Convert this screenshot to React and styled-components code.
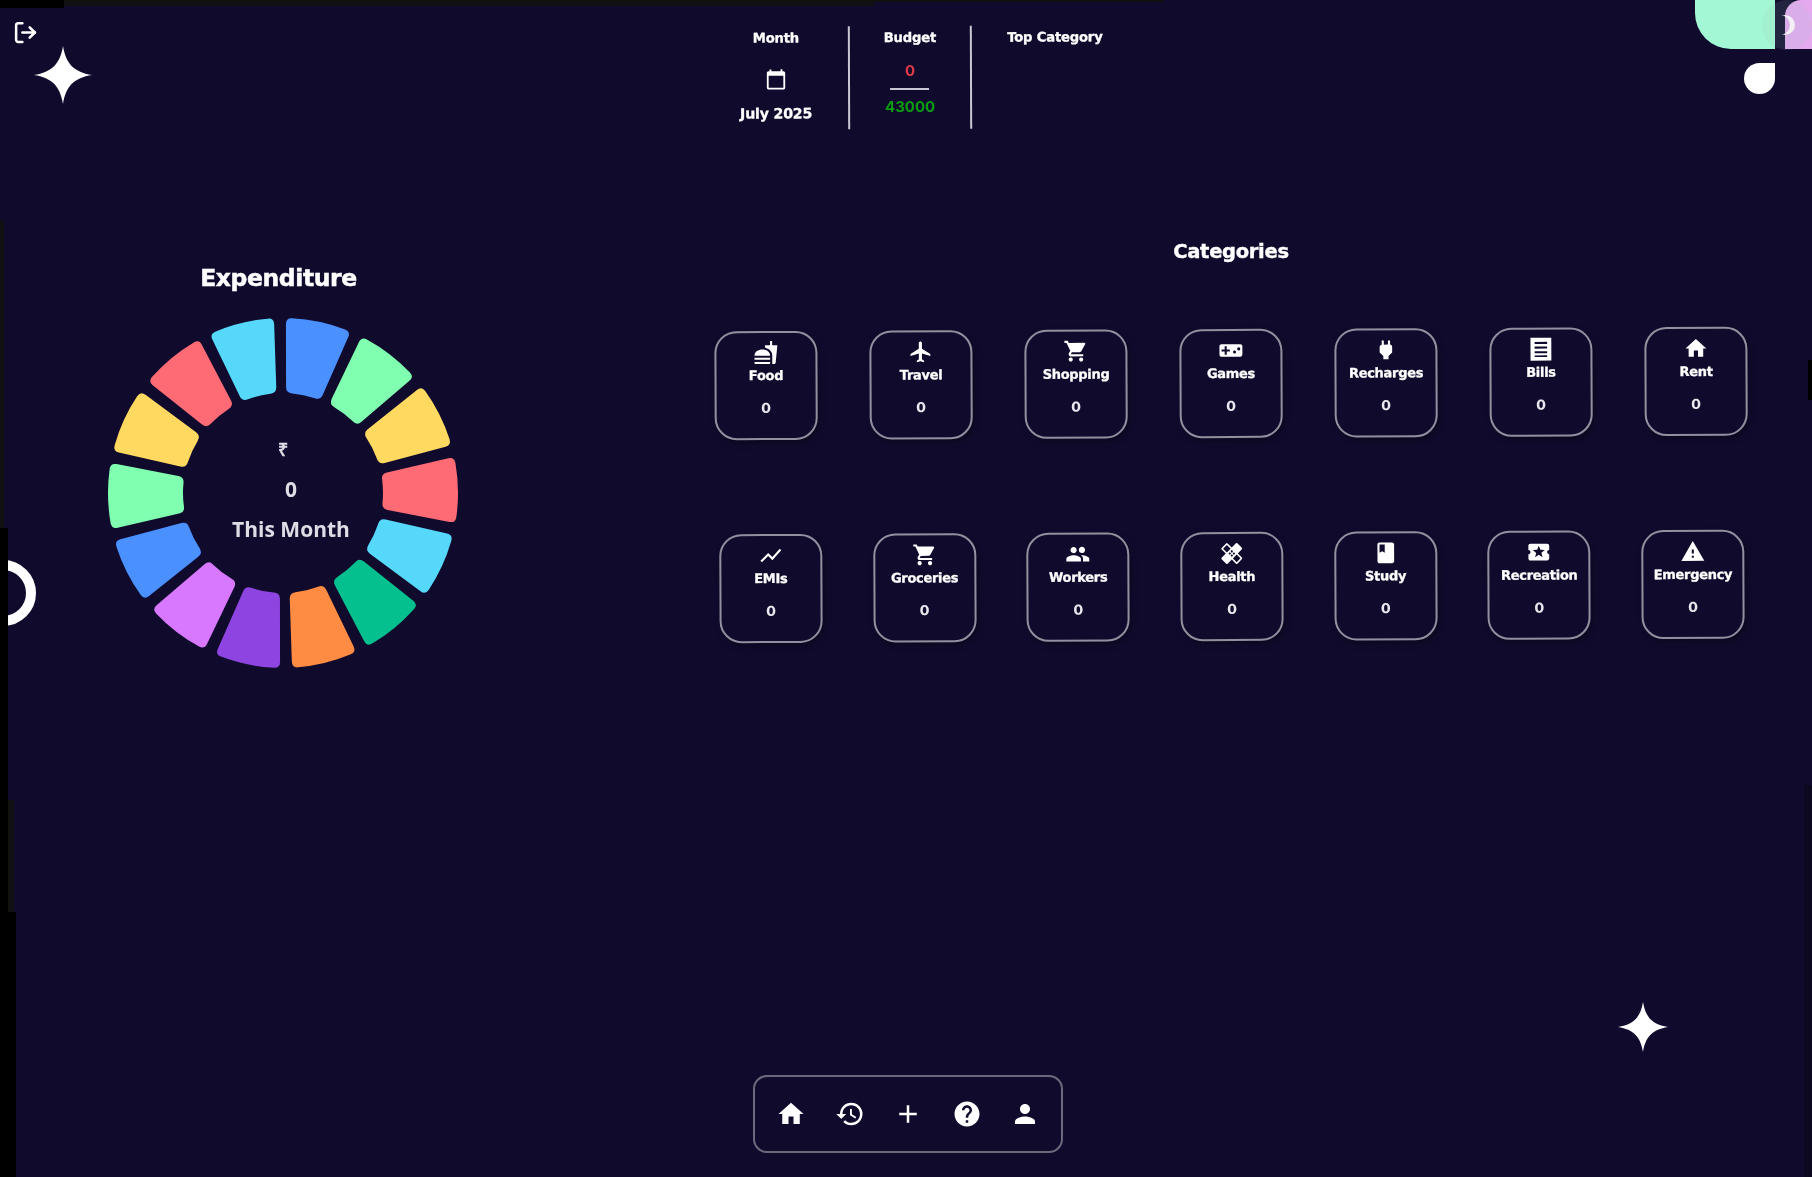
import { createGlobalStyle, styled } from "styled-components";
import { LogOut } from "lucide-react";
import {
  MdAdd,
  MdBook,
  MdCalendarToday,
  MdFastfood,
  MdFlight,
  MdGroup,
  MdHealing,
  MdHelp,
  MdHistory,
  MdHome,
  MdLocalActivity,
  MdPerson,
  MdPower,
  MdShoppingCart,
  MdShowChart,
  MdVideogameAsset,
  MdWarning,
} from "react-icons/md";

const WIDE = `"DejaVu Sans", "Liberation Sans", sans-serif`;

const BillsIcon = ({ size }) => (
  <svg width={size} height={size} viewBox="0 0 24 24">
    <path
      fill="#fff"
      fillRule="evenodd"
      d="M2 1h20v22H2z M6 5v2h12V5z M6 9.500v2h12v-2z M6 14v2h12v-2z M6 18v1.500h12V18z"
    />
  </svg>
);

const row_one = [
  { label: "Food", Icon: MdFastfood },
  { label: "Travel", Icon: MdFlight },
  { label: "Shopping", Icon: MdShoppingCart },
  { label: "Games", Icon: MdVideogameAsset },
  { label: "Recharges", Icon: MdPower },
  { label: "Bills", Icon: BillsIcon },
  { label: "Rent", Icon: MdHome },
];

const row_two = [
  { label: "EMIs", Icon: MdShowChart },
  { label: "Groceries", Icon: MdShoppingCart },
  { label: "Workers", Icon: MdGroup },
  { label: "Health", Icon: MdHealing },
  { label: "Study", Icon: MdBook },
  { label: "Recreation", Icon: MdLocalActivity },
  { label: "Emergency", Icon: MdWarning },
];

const wheel_colors = [
  "#4a90ff",
  "#80ffb0",
  "#ffd960",
  "#ff6b75",
  "#56d8fb",
  "#04c08e",
  "#ff8c42",
  "#8e44e0",
  "#d877ff",
  "#4a90ff",
  "#80ffb0",
  "#ffd960",
  "#ff6b75",
  "#56d8fb",
];

const polar = (r, deg) => {
  const rad = (deg * Math.PI) / 180;
  return [r * Math.sin(rad), -r * Math.cos(rad)];
};

const toward = (a, b, dist) => {
  const len = Math.hypot(b[0] - a[0], b[1] - a[1]);
  return [a[0] + ((b[0] - a[0]) * dist) / len, a[1] + ((b[1] - a[1]) * dist) / len];
};

const pt = (p) => `${p[0].toFixed(2)} ${p[1].toFixed(2)}`;

const segment_path = (a0, a1, R = 175, r = 100, corner = 6) => {
  const to_deg = 180 / Math.PI;
  const o0 = a0 + (6 / R) * to_deg;
  const o1 = a1 - (6 / R) * to_deg;
  const i0 = a0 + (4.8 / r) * to_deg;
  const i1 = a1 - (4.8 / r) * to_deg;
  const co = (corner / R) * to_deg;
  const ci = (corner / r) * to_deg;
  const O0 = polar(R, o0);
  const O1 = polar(R, o1);
  const I0 = polar(r, i0);
  const I1 = polar(r, i1);
  return [
    `M ${pt(polar(R, o0 + co))}`,
    `A ${R} ${R} 0 0 1 ${pt(polar(R, o1 - co))}`,
    `Q ${pt(O1)} ${pt(toward(O1, I1, corner))}`,
    `L ${pt(toward(I1, O1, corner))}`,
    `Q ${pt(I1)} ${pt(polar(r, i1 - ci))}`,
    `A ${r} ${r} 0 0 0 ${pt(polar(r, i0 + ci))}`,
    `Q ${pt(I0)} ${pt(toward(I0, O0, corner))}`,
    `L ${pt(toward(O0, I0, corner))}`,
    `Q ${pt(O0)} ${pt(polar(R, o0 + co))}`,
    "Z",
  ].join(" ");
};

const Sparkle = ({ className }) => (
  <svg className={className} viewBox="-100 -100 200 200">
    <path d="M0 -100 C10 -38 38 -10 100 0 C38 10 10 38 0 100 C-10 38 -38 10 -100 0 C-38 -10 -10 -38 0 -100 Z" fill="#fff" />
  </svg>
);

const CategoryRow = ({ items, $gap }) => (
  <Row $gap={$gap}>
    {items.map(({ label, Icon }) => (
      <Card key={label}>
        <Icon size={25} />
        <CardLabel>{label}</CardLabel>
        <CardValue>0</CardValue>
      </Card>
    ))}
  </Row>
);

const App = () => {
  const step = 360 / wheel_colors.length;
  return (
    <Page>
      <GlobalStyle />
      <Content>
        <Header>
          <StatColumn $width={146} $divider>
            <StatTitle>Month</StatTitle>
            <MonthIcon size={24} />
            <MonthValue>July 2025</MonthValue>
          </StatColumn>
          <StatColumn $width={122} $divider>
            <StatTitle>Budget</StatTitle>
            <Fraction>
              <Spent>0</Spent>
              <Limit>43000</Limit>
            </Fraction>
          </StatColumn>
          <StatColumn $width={166}>
            <StatTitle>Top Category</StatTitle>
          </StatColumn>
        </Header>

        <Main>
          <LeftSection>
            <SectionTitle>Expenditure</SectionTitle>
            <Wheel>
              <svg width="360" height="360" viewBox="-180 -180 360 360">
                {wheel_colors.map((color, i) => (
                  <path
                    key={i}
                    d={segment_path(i * step - 1, (i + 1) * step - 1)}
                    fill={color}
                  />
                ))}
              </svg>
              <WheelCenter>
                <Rupee>₹</Rupee>
                <span>0</span>
                <span>This Month</span>
              </WheelCenter>
            </Wheel>
          </LeftSection>

          <RightSection>
            <CategoriesTitle>Categories</CategoriesTitle>
            <Rows>
              <CategoryRow items={row_one} $gap={52} />
              <CategoryRow items={row_two} $gap={50.7} />
            </Rows>
          </RightSection>
        </Main>

        <BottomNav>
          <MdHome size={30} />
          <MdHistory size={30} />
          <MdAdd size={30} />
          <MdHelp size={30} />
          <MdPerson size={30} />
        </BottomNav>

        <LogoutIcon size={25} strokeWidth={2.4} />
        <TopStar />
        <BottomStar />
        <Ring />
        <MintShape />
        <PinkShape />
        <MoonHalo />
        <Moon />
        <Drop />
      </Content>

      <EdgeStrip $left={0} $top={0} $w={64} $h={8} $color="#000" />
      <EdgeStrip $left={64} $top={0} $w={810} $h={6} $color="#111" />
      <EdgeStrip $left={874} $top={0} $w={290} $h={2} $color="#111" />
      <EdgeStrip $left={0} $top={220} $w={4} $h={308} $color="#111" />
      <EdgeStrip $left={0} $top={528} $w={8} $h={384} $color="#000" />
      <EdgeStrip $left={8} $top={800} $w={6} $h={112} $color="#111" />
      <EdgeStrip $left={0} $top={912} $w={16} $h={265} $color="#000" />
      <EdgeStrip $left={1808} $top={360} $w={4} $h={40} $color="#000" />
      <EdgeStrip $left={1804} $top={785} $w={8} $h={392} $color="#0b0820" />
    </Page>
  );
};
export default App;

const GlobalStyle = createGlobalStyle`
  html, body {
    margin: 0;
    padding: 0;
    background: #100b2d;
  }
`;

const Page = styled.div`
  position: relative;
  width: 1812px;
  height: 1177px;
  overflow: hidden;
  background: #100b2d;
  color: #fff;
`;

const Content = styled.div`
  position: relative;
  display: flex;
  flex-direction: column;
  height: 100%;
  filter: blur(0.7px);
`;

const Header = styled.header`
  display: flex;
  height: 103px;
  margin-top: 26px;
  padding-left: 704px;
  transform: rotate(-0.2deg);
`;

const StatColumn = styled.div`
  display: flex;
  flex-direction: column;
  align-items: center;
  box-sizing: border-box;
  width: ${({ $width }) => $width}px;
  padding: 4px 0 8px;
  border-right: ${({ $divider }) => ($divider ? "2px solid #c9c8d2" : "none")};
`;

const StatTitle = styled.div`
  font-family: ${WIDE};
  font-size: 13.2px;
  line-height: 16px;
  font-weight: 700;
  letter-spacing: -0.2px;
  -webkit-text-stroke: 0.3px #fff;
`;

const MonthIcon = styled(MdCalendarToday)`
  margin-top: 22px;
`;

const MonthValue = styled(StatTitle)`
  margin-top: 15px;
  font-size: 14.2px;
`;

const Fraction = styled.div`
  display: flex;
  flex-direction: column;
  align-items: center;
  margin-top: 15px;
  font-family: Inter, sans-serif;
  font-size: 15px;
  font-weight: 700;
`;

const Spent = styled.div`
  width: 39px;
  padding-bottom: 8px;
  border-bottom: 2px solid #c9c8d2;
  margin-bottom: 7px;
  text-align: center;
  color: #e03a46;
`;

const Limit = styled.div`
  color: #0a9c0f;
`;

const Main = styled.main`
  display: flex;
  flex: 1;
  margin-top: 105px;
`;

const LeftSection = styled.section`
  display: flex;
  flex-direction: column;
  align-items: center;
  width: 566px;
  padding-top: 30px;
`;

const SectionTitle = styled.h2`
  margin: 0 9px 21px 0;
  font-family: ${WIDE};
  font-size: 23.5px;
  line-height: 28px;
  font-weight: 700;
  letter-spacing: -0.4px;
  -webkit-text-stroke: 0.5px #fff;
`;

const Wheel = styled.div`
  position: relative;
  width: 360px;
  height: 360px;
  svg {
    display: block;
  }
`;

const WheelCenter = styled.div`
  position: absolute;
  inset: 0 0 0 16px;
  display: flex;
  flex-direction: column;
  align-items: center;
  justify-content: center;
  gap: 11px;
  padding-bottom: 7px;
  font-family: "Open Sans", sans-serif;
  font-size: 21px;
  line-height: 29px;
  font-weight: 700;
  color: #dedde6;
`;

const Rupee = styled.span`
  margin-left: -16px;
  font-size: 18px;
`;

const RightSection = styled.section`
  flex: 1;
  display: flex;
  flex-direction: column;
  align-items: center;
  padding: 4px 0 0 84px;
`;

const CategoriesTitle = styled.h2`
  margin: 0 0 63px;
  font-family: ${WIDE};
  font-size: 19.5px;
  line-height: 28px;
  font-weight: 700;
  letter-spacing: -0.3px;
  -webkit-text-stroke: 0.4px #fff;
`;

const Rows = styled.div`
  display: flex;
  flex-direction: column;
  align-items: center;
  gap: 94px;
  transform: rotate(-0.25deg);
`;

const Row = styled.div`
  display: flex;
  gap: ${({ $gap }) => $gap}px;
`;

const Card = styled.div`
  display: flex;
  flex-direction: column;
  align-items: center;
  box-sizing: border-box;
  width: 103px;
  height: 109px;
  padding-top: 7px;
  border: 2px solid #92909f;
  border-radius: 22px;
  box-shadow: 2px 3px 6px rgba(0, 0, 0, 0.35);
`;

const CardLabel = styled.div`
  margin-top: 3px;
  font-family: ${WIDE};
  font-size: 13px;
  line-height: 16px;
  font-weight: 700;
  letter-spacing: -0.3px;
  white-space: nowrap;
  -webkit-text-stroke: 0.3px #fff;
`;

const CardValue = styled.div`
  margin-top: 15px;
  font-family: Inter, sans-serif;
  font-size: 14px;
  line-height: 18px;
  font-weight: 800;
  color: #e8e8ee;
`;

const BottomNav = styled.nav`
  display: flex;
  align-items: center;
  justify-content: space-between;
  box-sizing: border-box;
  width: 310px;
  height: 78px;
  margin: 0 0 24px 753px;
  padding: 0 21px 0 21px;
  border: 2px solid #6c697c;
  border-radius: 14px;
`;

const LogoutIcon = styled(LogOut)`
  position: absolute;
  left: 13px;
  top: 20px;
`;

const TopStar = styled(Sparkle)`
  position: absolute;
  left: 34px;
  top: 34px;
  width: 58px;
  height: 82px;
`;

const BottomStar = styled(Sparkle)`
  position: absolute;
  left: 1618px;
  top: 992px;
  width: 50px;
  height: 70px;
`;

const Ring = styled.div`
  position: absolute;
  left: -30px;
  top: 560px;
  box-sizing: border-box;
  width: 66px;
  height: 66px;
  border: 10px solid #fff;
  border-radius: 50%;
`;

const MintShape = styled.div`
  position: absolute;
  left: 1695px;
  top: 0;
  width: 80px;
  height: 49px;
  background: #a3f7d5;
  border-bottom-left-radius: 36px;
`;

const PinkShape = styled.div`
  position: absolute;
  left: 1785px;
  top: 0;
  width: 27px;
  height: 49px;
  background: #e5a9f0;
  border-top-left-radius: 16px;
`;

const Moon = styled.div`
  position: absolute;
  left: 1770px;
  top: 15px;
  width: 20px;
  height: 20px;
  border-radius: 50%;
  box-shadow: 5px 0 0 0 #f2f0f5;
`;

const MoonHalo = styled.div`
  position: absolute;
  left: 1762px;
  top: 0;
  width: 50px;
  height: 50px;
  border-radius: 50%;
  background: rgba(150, 200, 180, 0.14);
`;

const Drop = styled.div`
  position: absolute;
  left: 1744px;
  top: 63px;
  width: 31px;
  height: 31px;
  background: #fff;
  border-radius: 50% 0 50% 50%;
`;

const EdgeStrip = styled.div`
  position: absolute;
  left: ${({ $left }) => $left}px;
  top: ${({ $top }) => $top}px;
  width: ${({ $w }) => $w}px;
  height: ${({ $h }) => $h}px;
  background: ${({ $color }) => $color};
`;
